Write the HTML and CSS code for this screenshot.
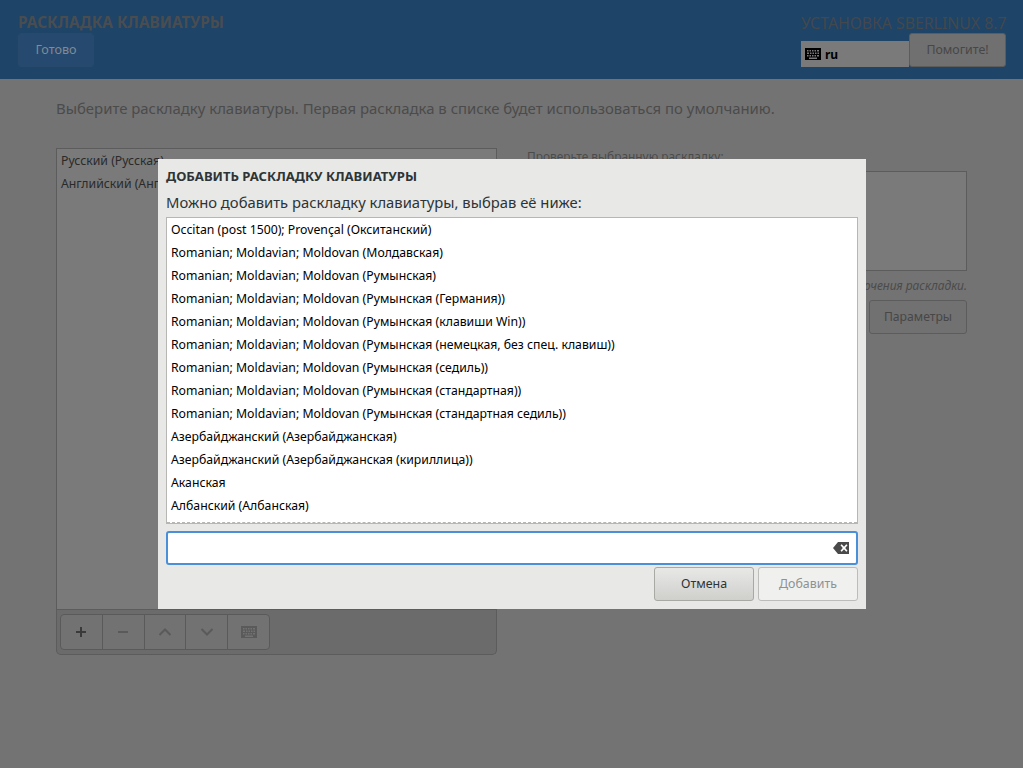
FILE: index.html
```html
<!DOCTYPE html>
<html lang="ru">
<head>
<meta charset="utf-8">
<title>Раскладка клавиатуры</title>
<link rel="stylesheet" href="styles.css">
</head>
<body>
<header class="topbar">
  <div class="topbar-left">
    <div class="spoke-title">РАСКЛАДКА КЛАВИАТУРЫ</div>
    <button class="done-btn">Готово</button>
  </div>
  <div class="topbar-right">
    <div class="product-title">УСТАНОВКА SBERLINUX 8.7</div>
    <div class="topbar-controls">
      <div class="layout-indicator">
        <svg class="kbd-icon" viewBox="0 0 16 12" width="16" height="12"><path fill="#000" fill-rule="evenodd" d="M0 0h16v12H0z M2 2v1.500h1.500V2z M4.500 2v1.500H6V2z M7 2v1.500h1.500V2z M9.500 2v1.500H11V2z M12 2v1.500h2V2z M2 4.500V6h2V4.500z M5 4.500V6h1.500V4.500z M7.500 4.500V6H9V4.500z M10 4.500V6h1.500V4.500z M12.500 4.500V6H14V4.500z M2 7v1.500h1.500V7z M4.500 7v1.500H6V7z M7 7v1.500h1.500V7z M9.500 7v1.500H11V7z M12 7v1.500h2V7z M4 9.500V11h8V9.500z"/></svg>
        <span class="layout-code">ru</span>
      </div>
      <button class="help-btn">Помогите!</button>
    </div>
  </div>
</header>

<main class="content">
  <p class="intro">Выберите раскладку клавиатуры. Первая раскладка в списке будет использоваться по умолчанию.</p>
  <div class="columns">
    <section class="left-col">
      <ul class="layout-list">
        <li>Русский (Русская)</li>
        <li>Английский (Английская)</li>
      </ul>
      <div class="toolbar">
        <div class="tool-group">
          <button class="tool tool-strong"><svg viewBox="0 0 12 12" width="12" height="12"><path d="M5 1h2v4h4v2H7v4H5V7H1V5h4z" fill="#3a3a3a"/></svg></button>
          <button class="tool"><svg viewBox="0 0 12 12" width="12" height="12"><path d="M1 5h10v2H1z" fill="#5a5a5a"/></svg></button>
          <button class="tool"><svg viewBox="0 0 14 12" width="14" height="12"><path d="M1.500 9 7 3.500 12.500 9" fill="none" stroke="#5a5a5a" stroke-width="2"/></svg></button>
          <button class="tool"><svg viewBox="0 0 14 12" width="14" height="12"><path d="M1.500 3 7 8.500 12.500 3" fill="none" stroke="#5a5a5a" stroke-width="2"/></svg></button>
          <button class="tool"><svg viewBox="0 0 16 12" width="16" height="12"><path fill="#5a5a5a" fill-rule="evenodd" d="M0 0h16v12H0z M2 2v1.500h1.500V2z M4.500 2v1.500H6V2z M7 2v1.500h1.500V2z M9.500 2v1.500H11V2z M12 2v1.500h2V2z M2 4.500V6h2V4.500z M5 4.500V6h1.500V4.500z M7.500 4.500V6H9V4.500z M10 4.500V6h1.500V4.500z M12.500 4.500V6H14V4.500z M2 7v1.500h1.500V7z M4.500 7v1.500H6V7z M7 7v1.500h1.500V7z M9.500 7v1.500H11V7z M12 7v1.500h2V7z M4 9.500V11h8V9.500z"/></svg></button>
        </div>
      </div>
    </section>
    <section class="right-col">
      <label class="test-label">Проверьте выбранную раскладку:</label>
      <div class="test-box"></div>
      <p class="switch-note">Сочетание клавиш Alt+Shift для переключения раскладки.</p>
      <div class="right-actions"><button class="params-btn">Параметры</button></div>
    </section>
  </div>
</main>

<div class="dialog" role="dialog">
  <h2 class="dialog-title">ДОБАВИТЬ РАСКЛАДКУ КЛАВИАТУРЫ</h2>
  <p class="dialog-sub">Можно добавить раскладку клавиатуры, выбрав её ниже:</p>
  <div class="picker">
    <ul class="picker-list">
      <li>Occitan (post 1500); Provençal (Окситанский)</li>
      <li>Romanian; Moldavian; Moldovan (Молдавская)</li>
      <li>Romanian; Moldavian; Moldovan (Румынская)</li>
      <li>Romanian; Moldavian; Moldovan (Румынская (Германия))</li>
      <li>Romanian; Moldavian; Moldovan (Румынская (клавиши Win))</li>
      <li>Romanian; Moldavian; Moldovan (Румынская (немецкая, без спец. клавиш))</li>
      <li>Romanian; Moldavian; Moldovan (Румынская (седиль))</li>
      <li>Romanian; Moldavian; Moldovan (Румынская (стандартная))</li>
      <li>Romanian; Moldavian; Moldovan (Румынская (стандартная седиль))</li>
      <li>Азербайджанский (Азербайджанская)</li>
      <li>Азербайджанский (Азербайджанская (кириллица))</li>
      <li>Аканская</li>
      <li>Албанский (Албанская)</li>
      <li>Албанский (Македонская (Plisi))</li>
    </ul>
  </div>
  <div class="search">
    <svg class="clear-icon" viewBox="0 0 16 12" width="16" height="12"><path fill="#4a4a4a" fill-rule="evenodd" d="M5 0h11v12H5L0 6z M7.500 3.200 9.800 6l-2.300 2.800 1.200 1L11 7.300l2.300 2.500 1.200-1L12.200 6l2.300-2.800-1.200-1L11 4.700 8.700 2.200z"/></svg>
  </div>
  <div class="dialog-actions">
    <button class="btn-cancel">Отмена</button>
    <button class="btn-add">Добавить</button>
  </div>
</div>
</body>
</html>
```

FILE: styles.css
```css
* { box-sizing: border-box; }
html, body { margin: 0; height: 100%; }
body {
  width: 1023px;
  height: 768px;
  overflow: hidden;
  background: #737373;
  font-family: "Noto Sans", "Open Sans", sans-serif;
  position: relative;
}
ul { list-style: none; margin: 0; padding: 0; }
p, h2 { margin: 0; }
button { font-family: inherit; }

.topbar {
  height: 79px;
  background: #1e4468;
  display: flex;
  justify-content: space-between;
  padding: 13px 17px 0 18px;
}
.spoke-title {
  font-size: 15.4px;
  line-height: 20px;
  font-weight: 700;
  color: #4a4d50;
  white-space: nowrap;
}
.done-btn {
  display: block;
  width: 76px;
  height: 34px;
  padding: 0 0 2px;
  background: #25496f;
  border: 1px solid #26496c;
  border-radius: 3px;
  color: #828a92;
  font-size: 12.6px;
}
.topbar-right { width: 205px; }
.product-title {
  font-size: 15.8px;
  line-height: 20px;
  color: #44484c;
  text-align: right;
  white-space: nowrap;
}
.topbar-controls { display: flex; align-items: flex-start; }
.layout-indicator {
  width: 108px;
  height: 26px;
  margin-top: 8px;
  background: #7a7a7a;
  display: flex;
  align-items: center;
  gap: 4px;
  padding-left: 4px;
}
.kbd-icon { display: block; }
.layout-code { font-size: 12px; font-weight: 700; color: #000; }
.help-btn {
  width: 97px;
  height: 34px;
  padding: 0 0 2px;
  background: #707070;
  border: 1px solid #5c5c5c;
  border-radius: 3px;
  color: #474747;
  font-size: 12.4px;
}

.content { padding: 0 56px; }
.intro {
  font-size: 14.9px;
  line-height: 20px;
  color: #4b4b4b;
  margin-top: 19px;
  white-space: nowrap;
}
.columns { display: flex; gap: 30px; margin-top: 30px; }
.left-col { width: 441px; }
.layout-list {
  height: 462px;
  background: #7a7a7a;
  border: 1px solid #5c5c5c;
  font-size: 12.25px;
  color: #2a2a2a;
}
.layout-list li { height: 23px; line-height: 23px; padding-left: 4px; white-space: nowrap; }
.toolbar {
  height: 45px;
  background: #6b6b6b;
  border: 1px solid #5c5c5c;
  border-top: none;
  border-radius: 0 0 5px 5px;
  padding: 4px 3px;
}
.tool-group {
  display: flex;
  width: 210px;
  height: 36px;
  border: 1px solid #5a5a5a;
  border-radius: 4px;
  background: #727272;
}
.tool {
  flex: 1;
  padding: 0;
  background: transparent;
  border: none;
  border-right: 1px solid #5a5a5a;
  display: flex;
  align-items: center;
  justify-content: center;
}
.tool:last-child { border-right: none; }

.right-col { width: 440px; }
.test-label {
  display: block;
  font-size: 11.9px;
  line-height: 16px;
  color: #4b4b4b;
}
.test-box {
  height: 100px;
  margin-top: 7px;
  background: #7a7a7a;
  border: 1px solid #5c5c5c;
}
.switch-note {
  margin-top: 7px;
  font-size: 12px;
  line-height: 16px;
  font-style: italic;
  color: #4b4b4b;
  text-align: right;
  white-space: nowrap;
}
.right-actions { display: flex; justify-content: flex-end; margin-top: 6px; }
.params-btn {
  width: 98px;
  height: 34px;
  padding: 0 0 2px;
  background: #717171;
  border: 1px solid #5c5c5c;
  border-radius: 3px;
  color: #474747;
  font-size: 12.2px;
}

.dialog {
  position: absolute;
  left: 158px;
  top: 159px;
  width: 708px;
  height: 450px;
  background: #e8e8e7;
  padding: 8px;
  display: flex;
  flex-direction: column;
}
.dialog-title {
  font-size: 13.1px;
  line-height: 16px;
  font-weight: 700;
  color: #2e3436;
  margin-top: 1px;
}
.dialog-sub {
  font-size: 14.8px;
  line-height: 20px;
  color: #2e3436;
  margin-top: 8px;
  white-space: nowrap;
}
.picker {
  height: 307px;
  margin-top: 5px;
  background: #fff;
  border: 1px solid #b6b6b3;
  overflow: hidden;
  position: relative;
}
.picker::after {
  content: "";
  position: absolute;
  left: 0;
  right: 0;
  bottom: 0;
  border-bottom: 1px dashed #b6b6b3;
}
.picker-list { font-size: 12.25px; color: #000; }
.picker-list li { height: 23px; line-height: 23px; padding-left: 4px; white-space: nowrap; }
.search {
  height: 34px;
  margin-top: 7px;
  background: #fff;
  border: 2px solid #4a90d9;
  border-radius: 3px;
  display: flex;
  align-items: center;
  justify-content: flex-end;
  padding-right: 7px;
}
.clear-icon { display: block; }
.dialog-actions { display: flex; justify-content: flex-end; gap: 4px; margin-top: 2px; }
.btn-cancel, .btn-add {
  width: 100px;
  height: 34px;
  padding: 0 0 2px;
  border-radius: 3px;
  font-size: 12.4px;
}
.btn-cancel {
  background: linear-gradient(#e8e8e7, #cfcfcc);
  border: 1px solid #a8a8a5;
  color: #2e3436;
}
.btn-add {
  background: #f0f0ef;
  border: 1px solid #bcbcb9;
  color: #8f9192;
}
```
